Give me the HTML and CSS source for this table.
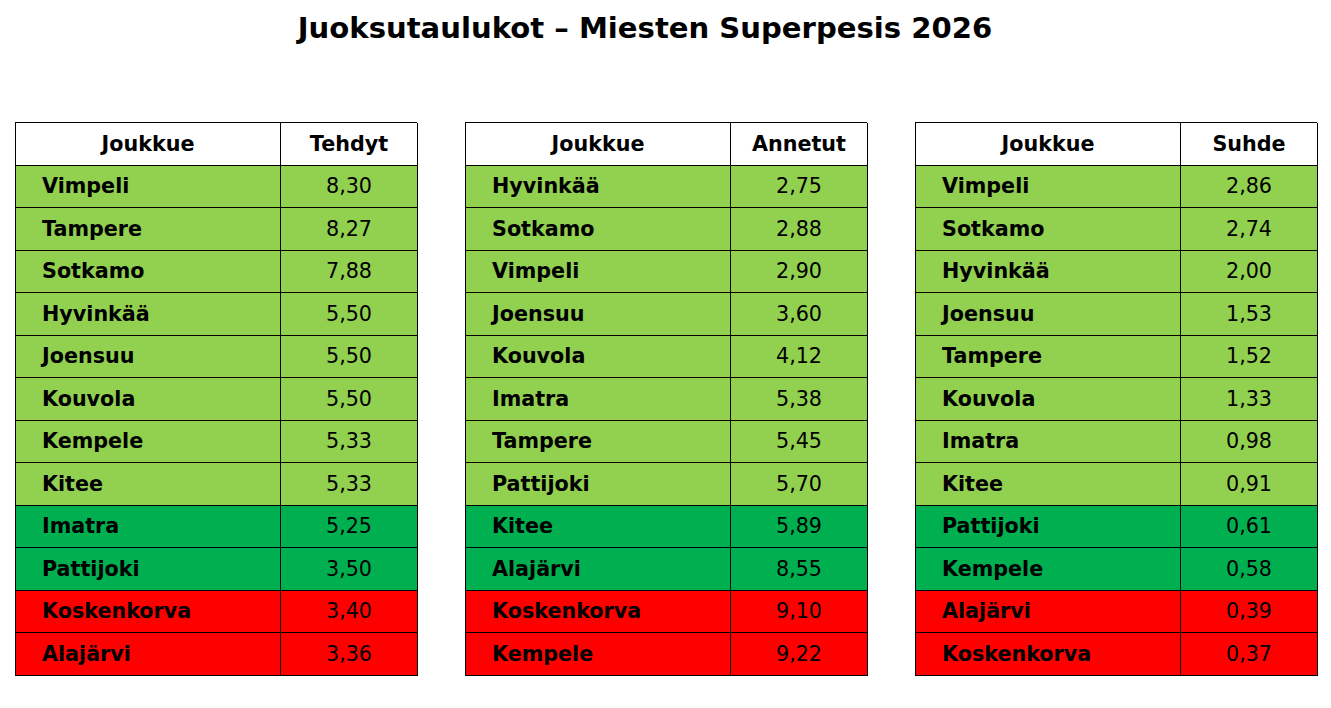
FILE: index.html
```html
<!DOCTYPE html>
<html lang="fi">
<head>
<meta charset="utf-8">
<title>Juoksutaulukot</title>
<link rel="stylesheet" href="styles.css">
</head>
<body>
<h1 class="title">Juoksutaulukot – Miesten Superpesis 2026</h1>
<div class="tables">
  <div class="tbl">
    <div class="c h">Joukkue</div><div class="c h">Tehdyt</div>
    <div class="c n lg">Vimpeli</div><div class="c v lg">8,30</div>
    <div class="c n lg">Tampere</div><div class="c v lg">8,27</div>
    <div class="c n lg">Sotkamo</div><div class="c v lg">7,88</div>
    <div class="c n lg">Hyvinkää</div><div class="c v lg">5,50</div>
    <div class="c n lg">Joensuu</div><div class="c v lg">5,50</div>
    <div class="c n lg">Kouvola</div><div class="c v lg">5,50</div>
    <div class="c n lg">Kempele</div><div class="c v lg">5,33</div>
    <div class="c n lg">Kitee</div><div class="c v lg">5,33</div>
    <div class="c n dg">Imatra</div><div class="c v dg">5,25</div>
    <div class="c n dg">Pattijoki</div><div class="c v dg">3,50</div>
    <div class="c n rd">Koskenkorva</div><div class="c v rd">3,40</div>
    <div class="c n rd">Alajärvi</div><div class="c v rd">3,36</div>
  </div>
  <div class="tbl">
    <div class="c h">Joukkue</div><div class="c h">Annetut</div>
    <div class="c n lg">Hyvinkää</div><div class="c v lg">2,75</div>
    <div class="c n lg">Sotkamo</div><div class="c v lg">2,88</div>
    <div class="c n lg">Vimpeli</div><div class="c v lg">2,90</div>
    <div class="c n lg">Joensuu</div><div class="c v lg">3,60</div>
    <div class="c n lg">Kouvola</div><div class="c v lg">4,12</div>
    <div class="c n lg">Imatra</div><div class="c v lg">5,38</div>
    <div class="c n lg">Tampere</div><div class="c v lg">5,45</div>
    <div class="c n lg">Pattijoki</div><div class="c v lg">5,70</div>
    <div class="c n dg">Kitee</div><div class="c v dg">5,89</div>
    <div class="c n dg">Alajärvi</div><div class="c v dg">8,55</div>
    <div class="c n rd">Koskenkorva</div><div class="c v rd">9,10</div>
    <div class="c n rd">Kempele</div><div class="c v rd">9,22</div>
  </div>
  <div class="tbl">
    <div class="c h">Joukkue</div><div class="c h">Suhde</div>
    <div class="c n lg">Vimpeli</div><div class="c v lg">2,86</div>
    <div class="c n lg">Sotkamo</div><div class="c v lg">2,74</div>
    <div class="c n lg">Hyvinkää</div><div class="c v lg">2,00</div>
    <div class="c n lg">Joensuu</div><div class="c v lg">1,53</div>
    <div class="c n lg">Tampere</div><div class="c v lg">1,52</div>
    <div class="c n lg">Kouvola</div><div class="c v lg">1,33</div>
    <div class="c n lg">Imatra</div><div class="c v lg">0,98</div>
    <div class="c n lg">Kitee</div><div class="c v lg">0,91</div>
    <div class="c n dg">Pattijoki</div><div class="c v dg">0,61</div>
    <div class="c n dg">Kempele</div><div class="c v dg">0,58</div>
    <div class="c n rd">Alajärvi</div><div class="c v rd">0,39</div>
    <div class="c n rd">Koskenkorva</div><div class="c v rd">0,37</div>
  </div>
</div>
</body>
</html>
```
FILE: styles.css
```css
html, body {
  margin: 0;
  padding: 0;
  background: #ffffff;
}
body {
  width: 1331px;
  height: 708px;
  overflow: hidden;
  font-family: "DejaVu Sans", sans-serif;
  color: #000;
}
.title {
  margin: 0;
  padding: 10px 41px 0 0;
  font-size: 29.1px;
  font-weight: bold;
  line-height: 36px;
  text-align: center;
}
.tables {
  display: flex;
  gap: 48px;
  padding: 76px 0 0 15px;
}
.tbl {
  display: grid;
  grid-template-columns: 265px 137px;
  grid-auto-rows: 42.5px;
  width: 402px;
  border-top: 1px solid #000;
  border-left: 1px solid #000;
  box-sizing: border-box;
}
.c {
  border-right: 1px solid #000;
  border-bottom: 1px solid #000;
  display: flex;
  align-items: center;
  font-size: 20.7px;
}
.h {
  background: #fff;
  font-weight: bold;
  justify-content: center;
}
.n {
  font-weight: bold;
  padding-left: 26px;
}
.v {
  justify-content: center;
}
.lg { background: #92d050; }
.dg { background: #00b050; }
.rd { background: #ff0000; }
```
